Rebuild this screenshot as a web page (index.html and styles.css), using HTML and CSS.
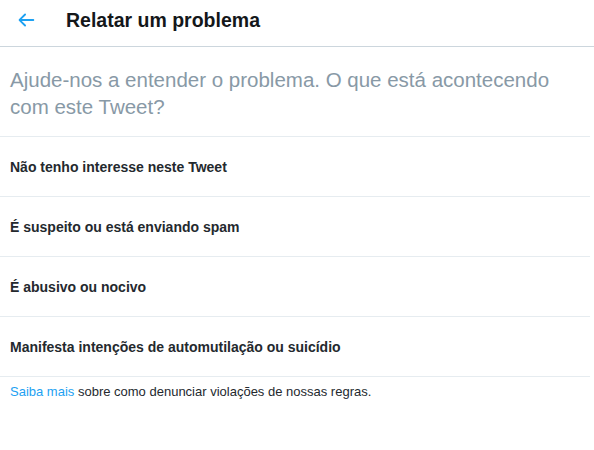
FILE: index.html
```html
<!DOCTYPE html>
<html lang="pt">
<head>
<meta charset="utf-8">
<title>Relatar um problema</title>
<link rel="stylesheet" href="styles.css">
</head>
<body>
<div class="page">
  <header class="header">
    <button class="back" aria-label="Voltar">
      <svg width="22" height="22" viewBox="0 0 24 24"><path d="M20 11H7.414l4.293-4.293a1 1 0 0 0-1.414-1.414l-6 6a1 1 0 0 0 0 1.414l6 6a1 1 0 0 0 1.414-1.414L7.414 13H20a1 1 0 1 0 0-2z" fill="#1da1f2"/></svg>
    </button>
    <h1 class="title">Relatar um problema</h1>
  </header>
  <main class="content">
    <p class="prompt">Ajude-nos a entender o problema. O que está acontecendo com este Tweet?</p>
    <ul class="options">
      <li class="option">Não tenho interesse neste Tweet</li>
      <li class="option">É suspeito ou está enviando spam</li>
      <li class="option">É abusivo ou nocivo</li>
      <li class="option">Manifesta intenções de automutilação ou suicídio</li>
    </ul>
    <p class="footer"><a class="link" href="#">Saiba mais</a> sobre como denunciar violações de nossas regras.</p>
  </main>
</div>
</body>
</html>
```

FILE: styles.css
```css
* { box-sizing: border-box; }
html, body { margin: 0; padding: 0; background: #fff; }
body { font-family: "Liberation Sans", Arial, sans-serif; color: #14171a; }
.page { width: 594px; }
.header {
  height: 47px;
  display: flex;
  align-items: center;
  border-bottom: 1px solid #ccd6dd;
  padding-left: 15px;
}
.back {
  border: 0; background: none; padding: 0; margin: 0;
  width: 22px; height: 22px; display: flex; align-items: center; justify-content: center;
  margin-top: -6px;
}
.title {
  margin: 0 0 0 29px;
  font-size: 19.5px;
  font-weight: 700;
  color: #14171a;
  margin-top: -5px;
}
.content { width: 590px; }
.prompt {
  margin: 0;
  padding: 19px 25px 16px 10px;
  font-size: 20.5px;
  line-height: 27px;
  color: #8899a6;
  border-bottom: 1px solid #e6ecf0;
}
.options { list-style: none; margin: 0; padding: 0; }
.option {
  height: 60px;
  display: flex;
  align-items: center;
  padding: 0 10px;
  font-size: 14px;
  font-weight: 700;
  color: #24292e;
  border-bottom: 1px solid #e6ecf0;
}
.footer {
  margin: 0;
  padding: 8px 10px;
  font-size: 13px;
  line-height: 14px;
  color: #24292e;
}
.link { color: #1da1f2; text-decoration: none; }
```
